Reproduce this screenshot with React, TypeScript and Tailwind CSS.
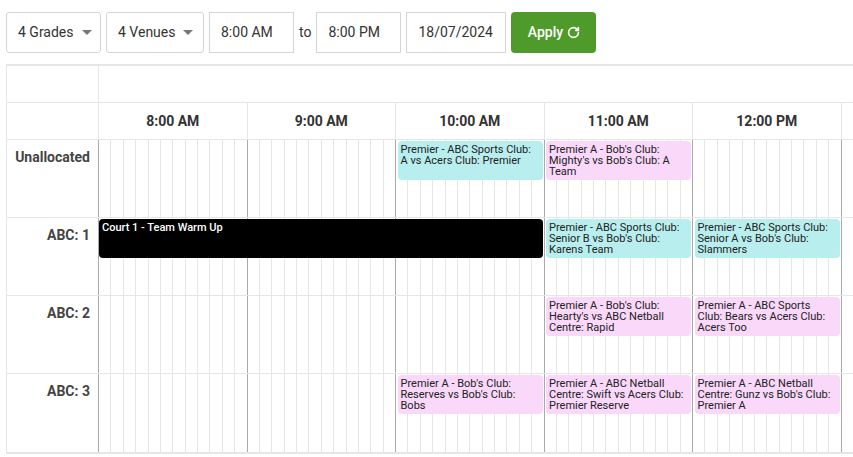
import { RotateCw } from 'lucide-react'

const HOUR = 148.5
const hours = ['8:00 AM', '9:00 AM', '10:00 AM', '11:00 AM', '12:00 PM', '']

type Ev = { start: number; end: number; text: string; kind: 'cyan' | 'pink' | 'black' }

const rows: { label: string; events: Ev[] }[] = [
  {
    label: 'Unallocated',
    events: [
      { start: 2, end: 3, text: 'Premier - ABC Sports Club: A vs Acers Club: Premier', kind: 'cyan' },
      { start: 3, end: 4, text: "Premier A - Bob's Club: Mighty's vs Bob's Club: A Team", kind: 'pink' }
    ]
  },
  {
    label: 'ABC: 1',
    events: [
      { start: 0, end: 3, text: 'Court 1 - Team Warm Up', kind: 'black' },
      { start: 3, end: 4, text: "Premier - ABC Sports Club: Senior B vs Bob's Club: Karens Team", kind: 'cyan' },
      { start: 4, end: 5, text: "Premier - ABC Sports Club: Senior A vs Bob's Club: Slammers", kind: 'cyan' }
    ]
  },
  {
    label: 'ABC: 2',
    events: [
      { start: 3, end: 4, text: "Premier A - Bob's Club: Hearty's vs ABC Netball Centre: Rapid", kind: 'pink' },
      { start: 4, end: 5, text: 'Premier A - ABC Sports Club: Bears vs Acers Club: Acers Too', kind: 'pink' }
    ]
  },
  {
    label: 'ABC: 3',
    events: [
      { start: 2, end: 3, text: "Premier A - Bob's Club: Reserves vs Bob's Club: Bobs", kind: 'pink' },
      { start: 3, end: 4, text: 'Premier A - ABC Netball Centre: Swift vs Acers Club: Premier Reserve', kind: 'pink' },
      { start: 4, end: 5, text: "Premier A - ABC Netball Centre: Gunz vs Bob's Club: Premier A", kind: 'pink' }
    ]
  }
]

const kindClass = {
  cyan: 'bg-[#b9eeee] text-[#222]',
  pink: 'bg-[#f9d8fa] text-[#222]',
  black: 'bg-black text-white font-medium'
}

const Caret = () => <span className="ml-2 inline-block border-x-[5px] border-t-[5px] border-x-transparent border-t-[#777]"></span>

const HourCell = () => (
  <div className="flex h-full w-[148.5px] shrink-0 border-r border-[#aaa]">
    {Array.from({ length: 12 }).map((_, i) => (
      <div key={i} className={`h-full flex-1 ${i < 11 ? 'border-r border-[#e6e6e6]' : ''}`}></div>
    ))}
  </div>
)

const App = () => {
  return (
    <div className="h-[457px] w-[853px] overflow-hidden bg-white font-['Roboto',sans-serif] text-[#333]">
      <div className="flex items-center gap-[5px] px-[6px] pt-[12px]">
        <div className="flex h-[41px] w-[95px] items-center rounded-[3px] border border-[#d6d6d6] pl-[11px] text-[14px]">
          4 Grades
          <Caret />
        </div>
        <div className="flex h-[41px] w-[98px] items-center rounded-[3px] border border-[#d6d6d6] pl-[11px] text-[14px]">
          4 Venues
          <Caret />
        </div>
        <div className="flex h-[41px] w-[85px] items-center border border-[#d6d6d6] pl-[11px] text-[14px]">8:00 AM</div>
        <span className="text-[14px]">to</span>
        <div className="flex h-[41px] w-[85px] items-center border border-[#d6d6d6] pl-[11px] text-[14px]">8:00 PM</div>
        <div className="flex h-[41px] w-[100px] items-center border border-[#d6d6d6] pl-[11px] text-[14px]">18/07/2024</div>
        <button className="flex h-[41px] w-[85px] items-center justify-center gap-[4px] rounded-[4px] bg-[#4e9b2b] text-[14px] font-medium text-white">
          Apply
          <RotateCw size={13} strokeWidth={3} />
        </button>
      </div>

      <div className="ml-[6px] mt-[11px] border-y-2 border-l border-[#e6e6e6]">
        <div className="flex h-[37px] border-b border-[#e6e6e6]">
          <div className="w-[92px] shrink-0 border-r border-[#e6e6e6]"></div>
          <div className="flex-1"></div>
        </div>
        <div className="flex h-[37px] border-b border-[#e6e6e6]">
          <div className="w-[92px] shrink-0 border-r border-[#e6e6e6]"></div>
          {hours.map((h, i) => (
            <div
              key={i}
              className="flex w-[148.5px] shrink-0 items-center justify-center border-r border-[#e6e6e6] text-[14px] font-bold"
            >
              {h}
            </div>
          ))}
        </div>
        {rows.map((row, idx) => (
          <div key={row.label} className={`flex h-[78px] ${idx < rows.length - 1 ? 'border-b border-[#e6e6e6]' : ''}`}>
            <div className="w-[92px] shrink-0 border-r border-[#aaa] pr-[8px] pt-[7px] text-right text-[14px] font-bold text-[#444]">
              {row.label}
            </div>
            <div className="relative flex">
              {hours.map((h, i) => (
                <HourCell key={i} />
              ))}
              {row.events.map(ev => (
                <div
                  key={ev.text}
                  className={`absolute top-[1px] h-[39px] overflow-hidden rounded-[4px] px-[3px] pt-[3px] text-[11px] leading-[11px] ${kindClass[ev.kind]}`}
                  style={{
                    left: ev.start * HOUR + (ev.start === 0 ? 0 : 1.5),
                    width: (ev.end - ev.start) * HOUR - (ev.start === 0 ? 2 : 3.5)
                  }}
                >
                  {ev.text}
                </div>
              ))}
            </div>
          </div>
        ))}
      </div>
    </div>
  )
}

export default App
